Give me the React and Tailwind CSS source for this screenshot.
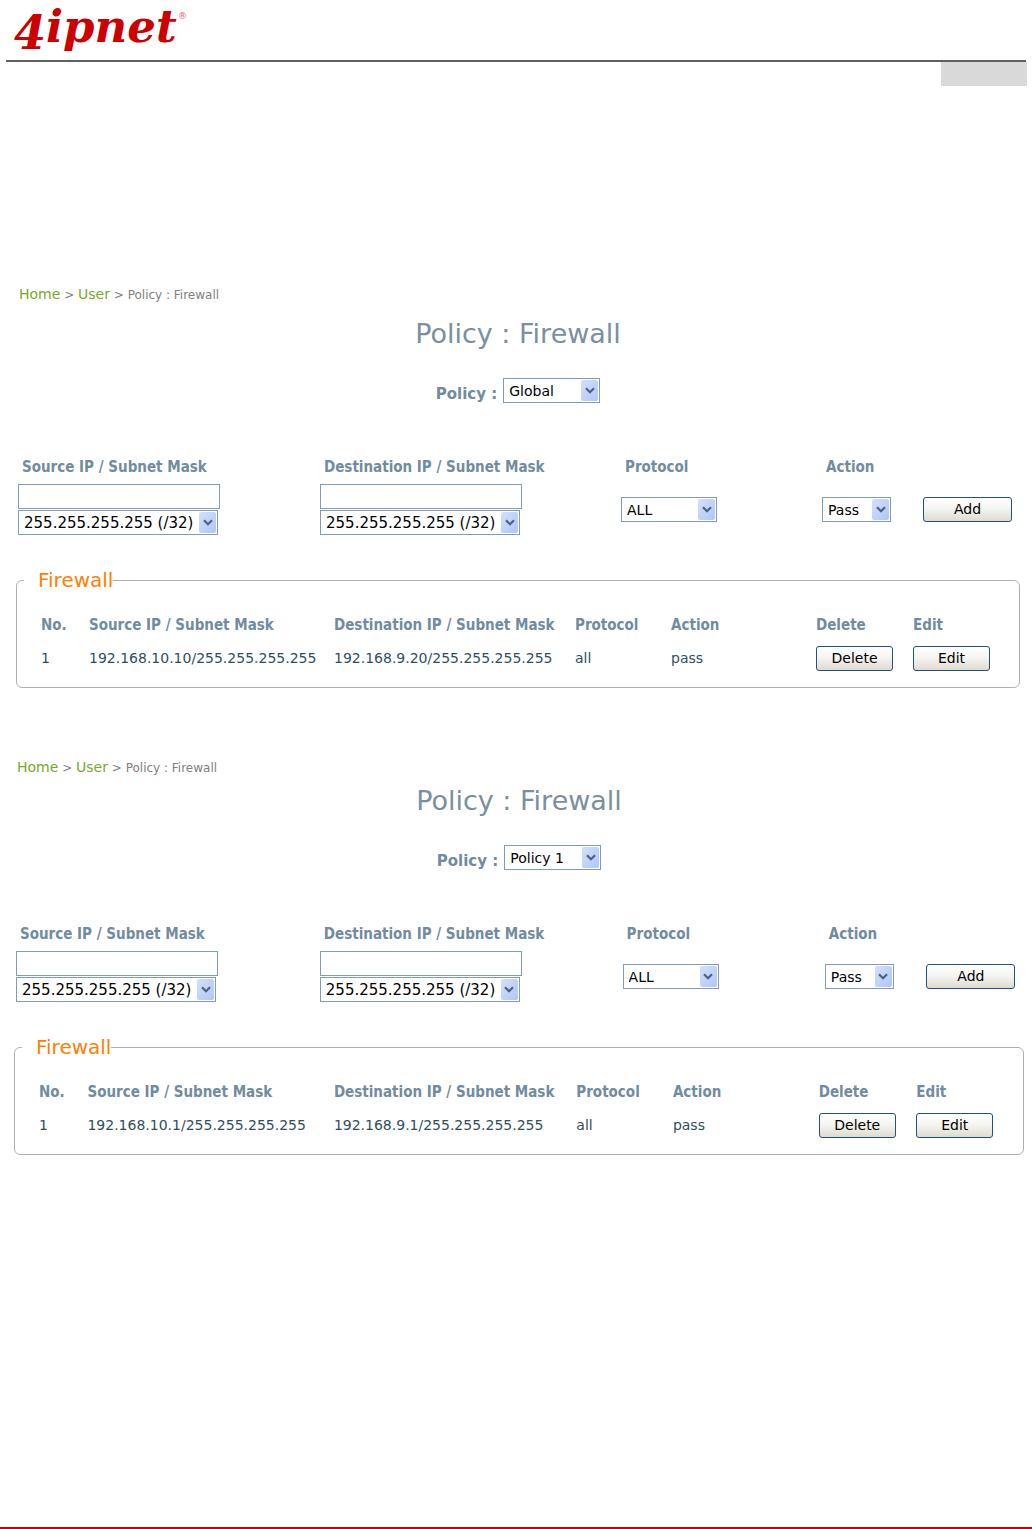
import { useState } from 'react';
import clsx from 'clsx';

const masks = ['255.255.255.255 (/32)', '255.255.255.0 (/24)', '255.255.0.0 (/16)', '255.0.0.0 (/8)'];
const protocols = ['ALL', 'TCP', 'UDP', 'ICMP'];
const actions = ['Pass', 'Block'];
const policies = ['Global', 'Policy 1', 'Policy 2', 'Policy 3'];

const panels = [
  {
    id: 'global',
    policy: 'Global',
    rules: [
      { source: '192.168.10.10/255.255.255.255', destination: '192.168.9.20/255.255.255.255', protocol: 'all', action: 'pass' },
    ],
  },
  {
    id: 'policy1',
    policy: 'Policy 1',
    rules: [
      { source: '192.168.10.1/255.255.255.255', destination: '192.168.9.1/255.255.255.255', protocol: 'all', action: 'pass' },
    ],
  },
];

function Logo() {
  return (
    <svg width="190" height="60" viewBox="0 0 190 60" role="img" aria-label="4ipnet" className="block">
      <g fill="#cc0000" fontFamily="'DejaVu Serif', serif" fontWeight="bold" fontStyle="italic">
        <text x="4" y="49" fontSize="46">4</text>
        <text x="36" y="42" fontSize="45">ipnet</text>
      </g>
      <text x="168" y="19" fontSize="9" fill="#dd6666" fontFamily="'DejaVu Sans', sans-serif">®</text>
    </svg>
  );
}

function Select({ id, label, value, options, className }) {
  const [selected, setSelected] = useState(value);

  return (
    <div className={clsx('relative h-[25px] text-black', className)}>
      <select
        id={id}
        aria-label={label}
        value={selected}
        onChange={(e) => setSelected(e.target.value)}
        className="block w-full h-full appearance-none rounded-none border border-[#7f9db9] bg-white pl-[5px] leading-[18px]"
      >
        {options.map((o) => (
          <option key={o}>{o}</option>
        ))}
      </select>
      <span className="pointer-events-none absolute right-[2px] top-[2px] bottom-[2px] flex w-[17px] items-center justify-center rounded-[2px] bg-gradient-to-br from-[#d4e0fc] to-[#aec6f8]">
        <svg width="10" height="7" viewBox="0 0 10 7" fill="none">
          <path d="M1 1.2 L5 5.2 L9 1.2" stroke="#4d6185" strokeWidth="2.2" />
        </svg>
      </span>
    </div>
  );
}

function Button({ children, className, ...props }) {
  return (
    <button
      type="button"
      className={clsx(
        'block h-[25px] rounded-[3px] border border-[#1f5285] bg-gradient-to-b from-white via-[#f3f3ef] to-[#dedbd0] pb-0.5 text-center text-[14px] leading-[22px] text-black',
        className
      )}
      {...props}
    >
      {children}
    </button>
  );
}

function AddressField({ id, label }) {
  return (
    <div>
      <input
        id={id}
        type="text"
        className="mb-px block h-[25px] w-[202px] border border-[#7f9db9] bg-white px-1 text-[14px]"
      />
      <Select id={`${id}-mask`} label={`${label} mask`} value={masks[0]} options={masks} className="w-[200px] text-[15px]" />
    </div>
  );
}

function FirewallPanel({ id, policy, rules, className, titleClassName }) {
  return (
    <section className={className}>
      <nav className="ml-[3px] h-5 text-[12px] leading-5 text-[#808080]">
        <a href="#home" className="text-[14px] text-[#76a82c]">Home</a>
        {' > '}
        <a href="#user" className="text-[14px] text-[#76a82c]">User</a>
        {' > '}
        <span>Policy : Firewall</span>
      </nav>

      <h1 className={clsx('text-center text-[27px] leading-8 text-[#7b8f9e]', titleClassName)}>Policy : Firewall</h1>

      <div className="mt-7 flex justify-center gap-1.5">
        <label htmlFor={`${id}-policy`} className="pt-1.5 text-[15px] leading-5 font-bold text-[#708ca0]">Policy :</label>
        <Select id={`${id}-policy`} value={policy} options={policies} className="w-[97px] text-[14px]" />
      </div>

      <form className="mt-[53px] px-0.5">
        <div className="grid grid-cols-[302fr_301fr_201fr_101fr_95fr] font-['DejaVu_Sans_Condensed','DejaVu_Sans',sans-serif] text-[15px] leading-5 font-bold text-[#708ca0]">
          <label htmlFor={`${id}-source`} className="pl-1">Source IP / Subnet Mask</label>
          <label htmlFor={`${id}-destination`} className="pl-1">Destination IP / Subnet Mask</label>
          <label htmlFor={`${id}-protocol`} className="pl-1">Protocol</label>
          <label htmlFor={`${id}-action`} className="pl-1">Action</label>
        </div>
        <div className="mt-[7px] grid grid-cols-[302fr_301fr_201fr_101fr_95fr] items-center">
          <AddressField id={`${id}-source`} label="Source" />
          <AddressField id={`${id}-destination`} label="Destination" />
          <Select id={`${id}-protocol`} value="ALL" options={protocols} className="w-[96px] text-[14px]" />
          <Select id={`${id}-action`} value="Pass" options={actions} className="w-[69px] text-[14px]" />
          <Button className="w-[89px]">Add</Button>
        </div>
      </form>

      <fieldset className="mt-[33px] rounded-md border border-[#b0b0b0] pb-4">
        <legend className="ml-[7px] pl-[14px] text-[20px] leading-6 text-[#ff7f00]">Firewall</legend>
        <table className="mt-[23px] w-full table-fixed text-left text-[14px] text-[#2f4f5f]">
          <colgroup>
            <col className="w-[72px]" />
            <col className="w-[245px]" />
            <col className="w-[241px]" />
            <col className="w-[96px]" />
            <col className="w-[145px]" />
            <col className="w-[97px]" />
            <col className="w-[106px]" />
          </colgroup>
          <thead>
            <tr className="h-[31px] align-top font-['DejaVu_Sans_Condensed','DejaVu_Sans',sans-serif] text-[15px] leading-5 text-[#708ca0]">
              <th className="pl-6">No.</th>
              <th>Source IP / Subnet Mask</th>
              <th>Destination IP / Subnet Mask</th>
              <th>Protocol</th>
              <th>Action</th>
              <th>Delete</th>
              <th>Edit</th>
            </tr>
          </thead>
          <tbody>
            {rules.map((r, i) => (
              <tr key={i}>
                <td className="pl-6">{i + 1}</td>
                <td>{r.source}</td>
                <td>{r.destination}</td>
                <td>{r.protocol}</td>
                <td>{r.action}</td>
                <td><Button className="w-[77px]">Delete</Button></td>
                <td><Button className="w-[77px]">Edit</Button></td>
              </tr>
            ))}
          </tbody>
        </table>
      </fieldset>
    </section>
  );
}

export default function App() {
  return (
    <div className="flex min-h-screen flex-col bg-white font-['DejaVu_Sans',Verdana,sans-serif]">
      <header className="ml-1.5 mr-[5px]">
        <div className="mr-px h-[62px] border-b-2 border-[#606060] pl-1">
          <Logo />
        </div>
        <div className="ml-auto h-6 w-[86px] bg-[#d9d9d9]" />
      </header>

      <main className="flex-1 pt-[198px]">
        <FirewallPanel {...panels[0]} className="ml-4 mr-3" titleClassName="mt-[14px]" />
        <FirewallPanel {...panels[1]} className="mt-[69px] ml-3.5 mr-2" titleClassName="mt-2" />
      </main>

      <footer className="border-b-2 border-[#cc0000]" />
    </div>
  );
}
